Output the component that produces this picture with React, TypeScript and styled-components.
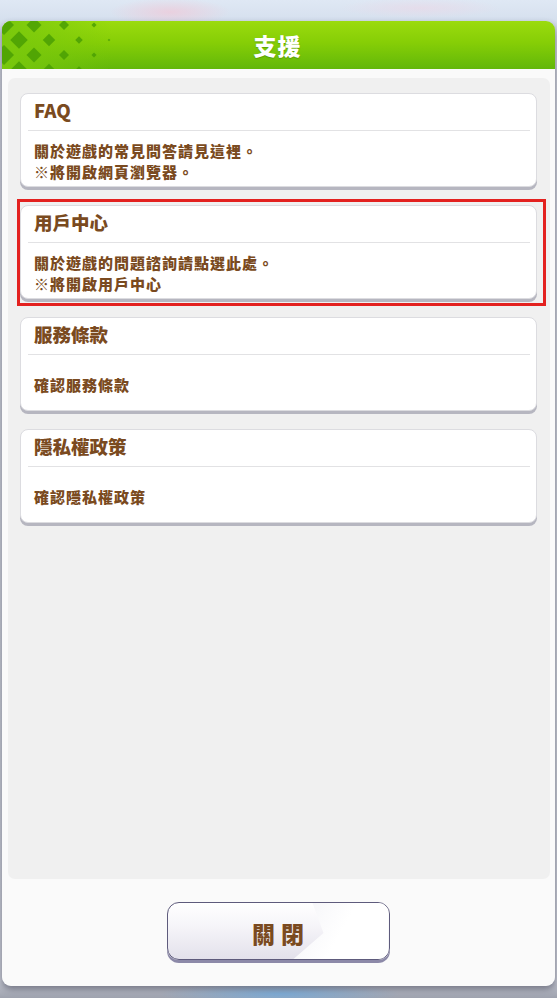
import React from "react";
import styled, { createGlobalStyle } from "styled-components";

const GlobalStyle = createGlobalStyle`
  html, body { margin: 0; padding: 0; }
  body {
    font-family: "Noto Sans CJK TC", "Noto Sans", sans-serif;
    background: #c9ced8;
  }
`;

const Page = styled.div`
  width: 557px;
  height: 998px;
  overflow: hidden;
  box-sizing: border-box;
  padding: 21px 2px 0 2px;
  background:
    radial-gradient(ellipse 60px 14px at 170px 12px, rgba(240, 200, 215, 0.7), transparent),
    radial-gradient(ellipse 80px 10px at 420px 8px, rgba(235, 215, 230, 0.6), transparent),
    radial-gradient(ellipse 120px 12px at 280px 994px, rgba(120, 170, 215, 0.9), transparent),
    linear-gradient(#dfe8f4 0px, #d6e0ee 20px, #c6cad4 40px, #c2c5cf 980px, #9ea2ae 998px);
`;

const Dialog = styled.div`
  width: 553px;
  display: flex;
  flex-direction: column;
  border-radius: 9px;
  box-shadow: 0 3px 6px rgba(40, 40, 60, 0.45);
`;

const Header = styled.div`
  position: relative;
  height: 48px;
  border-radius: 9px 9px 0 0;
  background: linear-gradient(#9bdb0e 0%, #86ce06 45%, #62b70a 100%);
  display: flex;
  align-items: center;
  justify-content: center;
  overflow: hidden;
`;

const Pattern = styled.svg`
  position: absolute;
  left: 0;
  top: 0;
`;

const Title = styled.h1`
  position: relative;
  margin: 0 0 0 -2px;
  font-size: 23px;
  font-weight: 900;
  color: #ffffff;
  letter-spacing: 1px;
  text-shadow: 0 1px 1px rgba(60, 120, 0, 0.5);
`;

const Body = styled.div`
  background: #fafafa;
  border-radius: 0 0 9px 9px;
  padding: 9px 5px 0 6px;
  display: flex;
  flex-direction: column;
`;

const Inner = styled.div`
  height: 801px;
  box-sizing: border-box;
  background: #f0f0f0;
  border-radius: 7px;
  padding: 15px 13px 0 12px;
  display: flex;
  flex-direction: column;
  gap: 18px;
`;

const Card = styled.div<{ $highlight?: boolean }>`
  position: relative;
  height: 94px;
  box-sizing: border-box;
  background: #ffffff;
  border: 1px solid #dcdce0;
  border-radius: 8px;
  box-shadow: 0 3px 0 #b6b6c0;
  display: flex;
  flex-direction: column;

  ${(p) =>
    p.$highlight &&
    `
    &::after {
      content: "";
      position: absolute;
      left: -4px;
      top: -7px;
      right: -10px;
      bottom: -8px;
      border: 3px solid #e3211f;
      pointer-events: none;
    }
  `}
`;

const CardTitle = styled.div`
  height: 36px;
  box-sizing: border-box;
  padding: 0 0 4px 13px;
  display: flex;
  align-items: center;
  font-size: 18.5px;
  font-weight: 900;
  color: #7a4a20;
`;

const Divider = styled.div`
  height: 1px;
  margin: 0 6px 0 7px;
  background: #e2e2e4;
`;

const CardBody = styled.div`
  flex: 1;
  padding: 4px 0 0 13px;
  display: flex;
  flex-direction: column;
  justify-content: center;
  font-size: 15px;
  letter-spacing: 1px;
  line-height: 21px;
  font-weight: 900;
  color: #7a4a20;
`;

const Footer = styled.div`
  height: 107px;
  display: flex;
  justify-content: center;
  padding-top: 23px;
  box-sizing: border-box;
`;

const CloseButton = styled.button`
  position: relative;
  width: 223px;
  height: 58px;
  margin-left: -2px;
  border: 1.5px solid #5e5b7c;
  border-radius: 12px;
  background: linear-gradient(#ffffff 0%, #f6f5f9 40%, #e3e1eb 100%);
  box-shadow: 0 3px 0 #8c89a8;
  overflow: hidden;
  cursor: pointer;
  font-family: "Noto Sans CJK TC", "Noto Sans", sans-serif;
  padding: 0;

  &::before {
    content: "";
    position: absolute;
    inset: 0;
    clip-path: polygon(145px 0, 100% 0, 100% 100%, 126px 100%, 156px 30px);
    background: linear-gradient(120deg, #e3e1ea 0%, #e9e7ef 30%, #f6f6f9 55%, #ffffff 75%);
  }
`;

const ButtonLabel = styled.span`
  position: relative;
  display: block;
  padding-top: 3px;
  font-size: 23px;
  font-weight: 900;
  color: #7a4a20;
  letter-spacing: 6px;
  margin-right: -6px;
`;

function DiamondPattern() {
  const shapes: React.ReactNode[] = [];
  const step = 15;
  for (let c = 0; c < 8; c++) {
    const cx = c * step + 2;
    const half = Math.max(1.3, 10 - c * 1.25);
    const offset = c % 2 === 0 ? 0 : step;
    for (let r = -1; r < 3; r++) {
      const cy = r * step * 2 + offset + 4;
      shapes.push(
        <polygon
          key={`${c}-${r}`}
          points={`${cx},${cy - half} ${cx + half},${cy} ${cx},${cy + half} ${cx - half},${cy}`}
          fill="#4a9f04"
          opacity={0.85}
        />
      );
    }
  }
  return (
    <Pattern width="130" height="48" viewBox="0 0 130 48">
      <defs>
        <linearGradient id="fadeBg" x1="0" x2="1" y1="0" y2="0">
          <stop offset="0" stopColor="#79c80c" stopOpacity="1" />
          <stop offset="1" stopColor="#79c80c" stopOpacity="0" />
        </linearGradient>
      </defs>
      <rect x="0" y="0" width="110" height="48" fill="url(#fadeBg)" />
      {shapes}
    </Pattern>
  );
}

type Item = { title: string; lines: string[]; highlight?: boolean };

const items: Item[] = [
  { title: "FAQ", lines: ["關於遊戲的常見問答請見這裡。", "※將開啟網頁瀏覽器。"] },
  {
    title: "用戶中心",
    lines: ["關於遊戲的問題諮詢請點選此處。", "※將開啟用戶中心"],
    highlight: true,
  },
  { title: "服務條款", lines: ["確認服務條款"] },
  { title: "隱私權政策", lines: ["確認隱私權政策"] },
];

export default function App() {
  return (
    <>
      <GlobalStyle />
      <Page>
        <Dialog>
          <Header>
            <DiamondPattern />
            <Title>支援</Title>
          </Header>
          <Body>
            <Inner>
              {items.map((it) => (
                <Card key={it.title} $highlight={it.highlight}>
                  <CardTitle>{it.title}</CardTitle>
                  <Divider />
                  <CardBody>
                    {it.lines.map((l) => (
                      <div key={l}>{l}</div>
                    ))}
                  </CardBody>
                </Card>
              ))}
            </Inner>
            <Footer>
              <CloseButton>
                <ButtonLabel>關閉</ButtonLabel>
              </CloseButton>
            </Footer>
          </Body>
        </Dialog>
      </Page>
    </>
  );
}
